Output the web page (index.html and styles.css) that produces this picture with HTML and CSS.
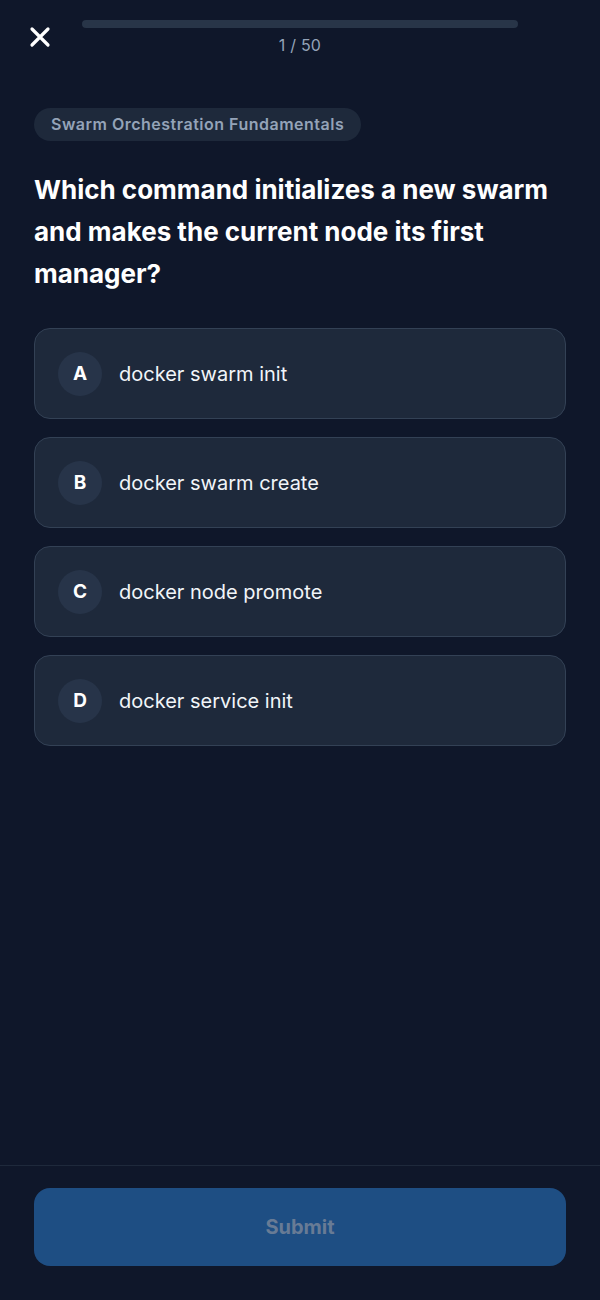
FILE: index.html
```html
<!DOCTYPE html>
<html lang="en">
<head>
<meta charset="utf-8">
<title>Quiz</title>
<link rel="stylesheet" href="styles.css">
</head>
<body>
<div class="page">
  <header class="top">
    <button class="close" aria-label="Close">
      <svg width="22" height="22" viewBox="0 0 22 22"><path d="M3 3 L19 19 M19 3 L3 19" stroke="#fff" stroke-width="3.2" stroke-linecap="round"/></svg>
    </button>
    <div class="progress">
      <div class="track"><div class="fill" style="width:0%"></div></div>
      <div class="count">1 / 50</div>
    </div>
    <div></div>
  </header>
  <main class="content">
    <span class="chip">Swarm Orchestration Fundamentals</span>
    <h1 class="question">Which command initializes a new swarm and makes the current node its first manager?</h1>
    <div class="options">
      <div class="option"><span class="letter">A</span><span class="text">docker swarm init</span></div>
      <div class="option"><span class="letter">B</span><span class="text">docker swarm create</span></div>
      <div class="option"><span class="letter">C</span><span class="text">docker node promote</span></div>
      <div class="option"><span class="letter">D</span><span class="text">docker service init</span></div>
    </div>
  </main>
  <footer class="footer">
    <button class="submit">Submit</button>
  </footer>
</div>
</body>
</html>
```
FILE: styles.css
```css
* { box-sizing: border-box; }
html, body { margin: 0; padding: 0; background: #0f172a; }
body { font-family: Inter, "Noto Sans", "Liberation Sans", sans-serif; color: #f1f5f9; }
.page { min-height: 1300px; display: flex; flex-direction: column; }
.top { display: grid; grid-template-columns: 82px 1fr 82px; padding-top: 20px; }
.close { background: none; border: 0; padding: 0; width: 82px; height: 34px; display: flex; align-items: center; justify-content: center; cursor: pointer; }
.close svg { display: block; margin-left: -2px; }
.progress { display: flex; flex-direction: column; align-items: center; }
.track { width: 100%; height: 8px; border-radius: 4px; background: #283548; overflow: hidden; }
.fill { height: 100%; background: #3b82f6; }
.count { margin-top: 7px; font-size: 16px; line-height: 20px; color: #94a3b8; letter-spacing: 0.2px; }
.content { flex: 1; padding: 0 34px; display: flex; flex-direction: column; align-items: flex-start; }
.chip { margin-top: 53px; display: inline-block; height: 33px; line-height: 33px; padding: 0 17px; border-radius: 17px; background: #1e293b; color: #94a3b8; font-size: 16px; font-weight: 600; letter-spacing: 0.5px; }
.question { margin: 28px 0 0; font-size: 26px; line-height: 42px; font-weight: 700; color: #fff; letter-spacing: 0; }
.options { margin-top: 33px; width: 100%; display: flex; flex-direction: column; gap: 18px; }
.option { height: 91px; display: flex; align-items: center; padding: 0 23px; border: 1px solid #334155; border-radius: 16px; background: #1e293b; }
.letter { width: 44px; height: 44px; border-radius: 50%; background: #273449; display: flex; align-items: center; justify-content: center; font-size: 19px; font-weight: 700; color: #fff; flex: none; }
.text { margin-left: 17px; font-size: 20px; color: #f1f5f9; }
.footer { border-top: 1px solid #1e293b; padding: 22px 34px 34px; }
.submit { width: 100%; height: 78px; border: 0; border-radius: 16px; background: #1e4e83; color: #687b95; font-family: inherit; font-size: 20px; font-weight: 700; }
```
